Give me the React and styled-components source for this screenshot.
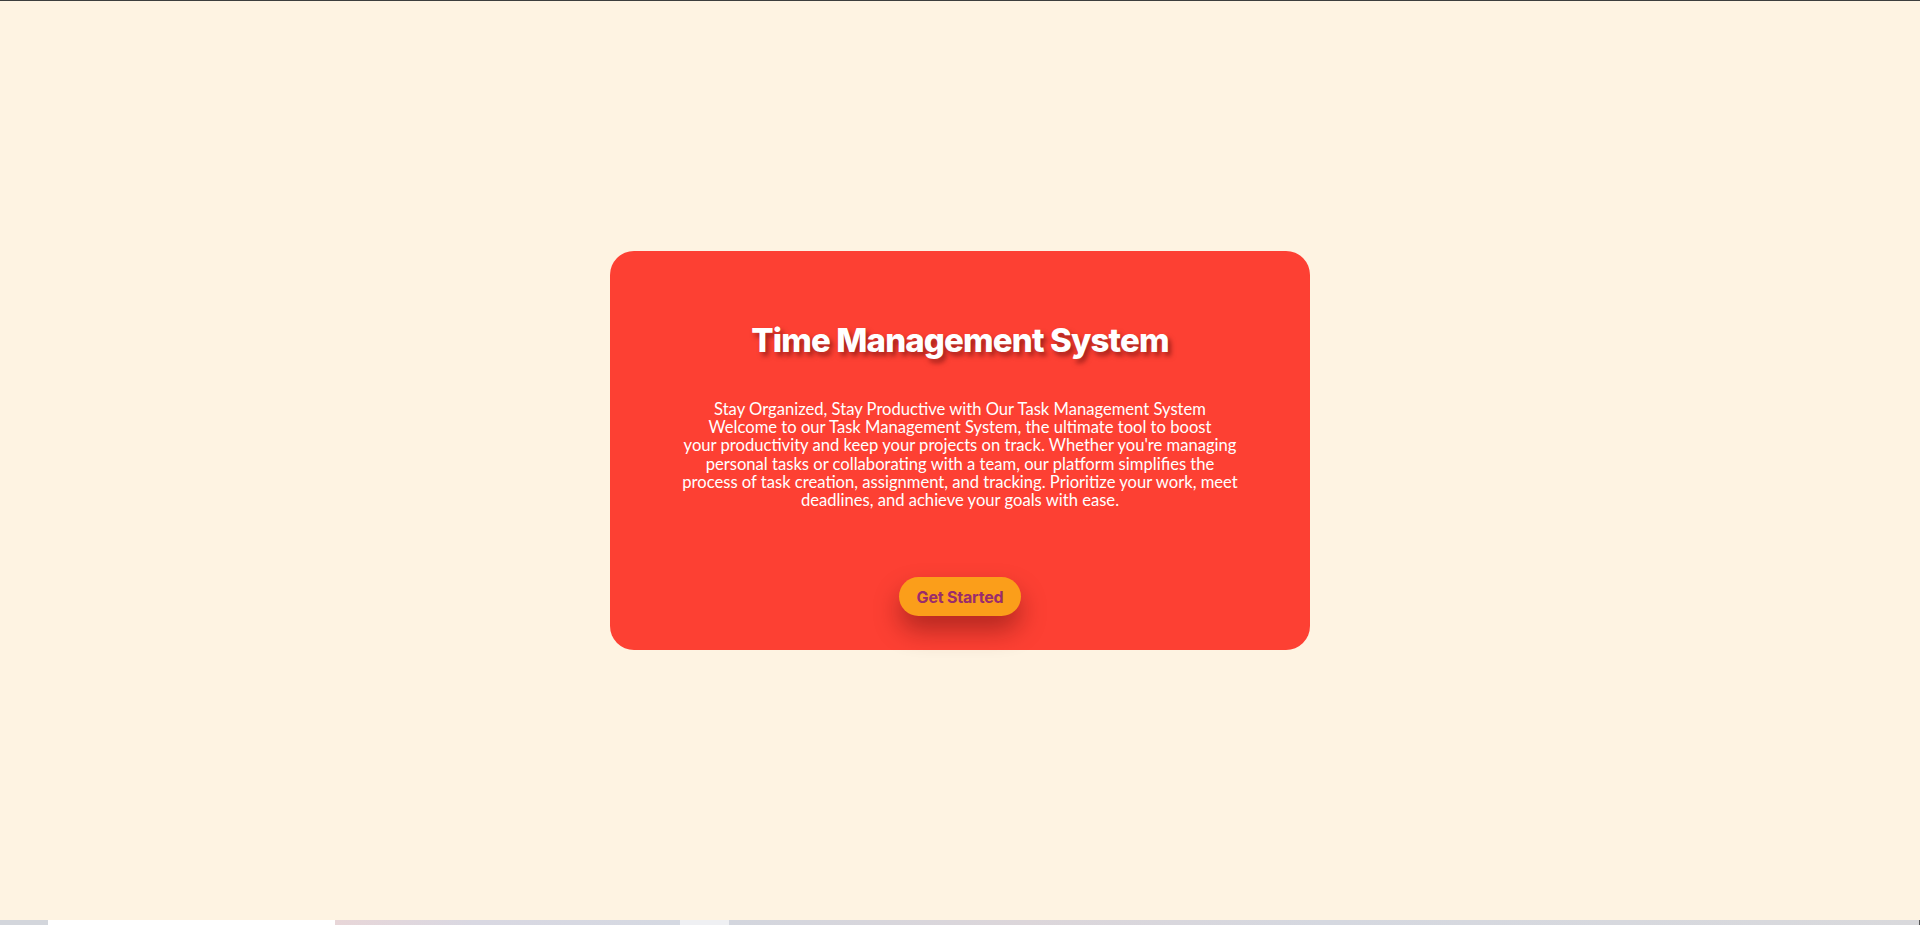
import React from "react";
import styled, { createGlobalStyle } from "styled-components";

const Global = createGlobalStyle`
  html, body { margin: 0; padding: 0; }
  body { background: #fef3e2; font-family: Lato, "Noto Sans", sans-serif; }
  * { box-sizing: border-box; }
`;

const Page = styled.div`
  height: 925px;
  display: flex;
  flex-direction: column;
  background: #fef3e2;
  border-top: 1px solid #3d3d3d;
  overflow: hidden;
`;

const Main = styled.main`
  flex: 1;
  display: flex;
  align-items: flex-start;
  justify-content: center;
  padding-top: 250px;
`;

const Card = styled.section`
  width: 700px;
  height: 399px;
  background: #fd4033;
  border-radius: 24px;
  display: flex;
  flex-direction: column;
  align-items: center;
  padding-top: 68px;
  color: #fff;
`;

const Title = styled.h1`
  margin: 0;
  font-family: Inter, "Noto Sans", sans-serif;
  font-weight: 800;
  font-size: 33px;
  letter-spacing: -0.85px;
  line-height: 42px;
  color: #fff;
  text-shadow: 3px 4px 5px rgba(90, 10, 10, 0.55);
`;

const Text = styled.p`
  margin: 39px 0 0;
  font-family: Lato, "Noto Sans", sans-serif;
  font-size: 16.6px;
  line-height: 18.2px;
  text-align: center;
  white-space: nowrap;
  color: #fff;
`;

const Button = styled.button`
  margin-top: 68px;
  height: 39px;
  padding: 0 18px;
  border: none;
  border-radius: 20px;
  background: #fb9e1a;
  color: #9a2c6c;
  font-family: Inter, "Noto Sans", sans-serif;
  font-weight: 700;
  font-size: 16px;
  letter-spacing: -0.2px;
  cursor: pointer;
  box-shadow: 0 14px 26px rgba(90, 10, 10, 0.45);
`;

const Strip = styled.div`
  height: 5px;
  display: flex;
`;

const Seg = styled.div`
  width: ${(p) => p.$w || "auto"};
  flex: ${(p) => (p.$grow ? 1 : "none")};
  background: ${(p) => p.$bg};
  border-right: ${(p) => (p.$edge ? "1px solid #555" : "none")};
`;

export default function App() {
  return (
    <>
      <Global />
      <Page>
        <Main>
          <Card>
            <Title>Time Management System</Title>
            <Text>
              Stay Organized, Stay Productive with Our Task Management System
              <br />
              Welcome to our Task Management System, the ultimate tool to boost
              <br />
              your productivity and keep your projects on track. Whether you're managing
              <br />
              personal tasks or collaborating with a team, our platform simplifies the
              <br />
              process of task creation, assignment, and tracking. Prioritize your work, meet
              <br />
              deadlines, and achieve your goals with ease.
            </Text>
            <Button>Get Started</Button>
          </Card>
        </Main>
        <Strip>
          <Seg $w="48px" $bg="#d3d6dc" />
          <Seg $w="287px" $bg="#ffffff" />
          <Seg $w="345px" $bg="linear-gradient(90deg, #e8d6d8, #d9d8e2 40%, #d5d9e2)" />
          <Seg $w="49px" $bg="#eff0f3" />
          <Seg $grow $edge $bg="linear-gradient(90deg, #d3d6de, #dcd6da 25%, #d5d8e0 50%, #d9d9dc)" />
        </Strip>
      </Page>
    </>
  );
}
